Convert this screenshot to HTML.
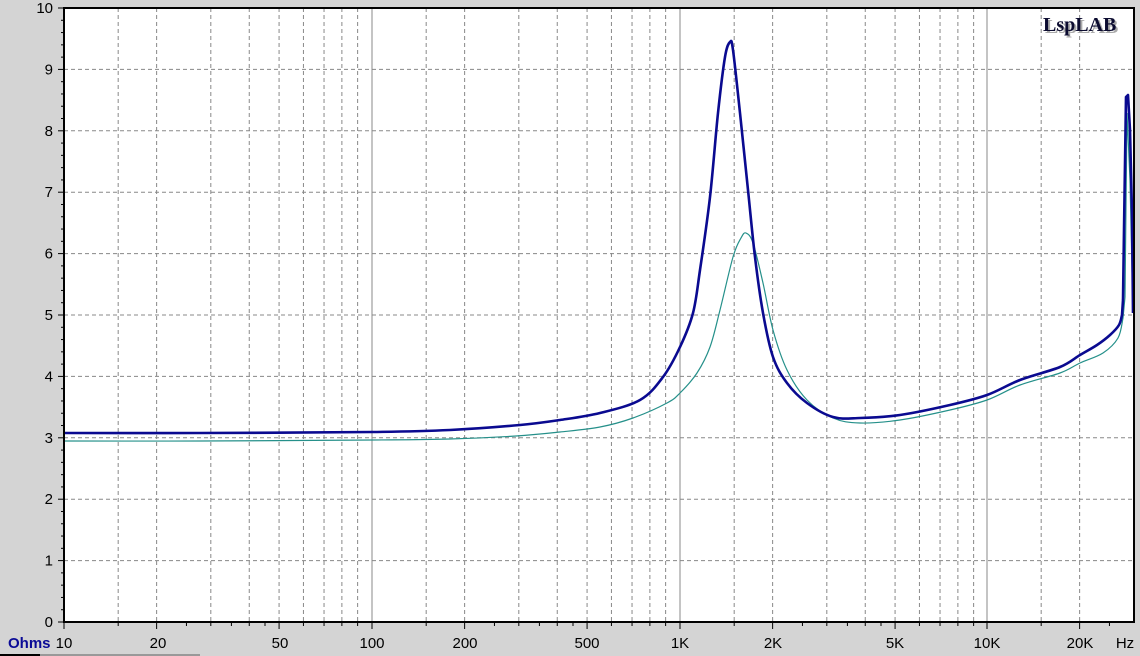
<!DOCTYPE html>
<html><head><meta charset="utf-8"><style>
html,body{margin:0;padding:0;background:#d4d4d4;width:1140px;height:656px;overflow:hidden}
svg{display:block}
text{font-family:"Liberation Sans",Arial,sans-serif;font-size:15px;fill:#000}
</style></head><body>
<svg id="s" width="1140" height="656" xmlns="http://www.w3.org/2000/svg">
<rect x="0" y="0" width="1140" height="656" fill="#d4d4d4"/>
<rect x="64" y="8" width="1070" height="614" fill="#fff"/>
<g id="grid"></g>
<path id="teal" fill="none" stroke="#25908a" stroke-width="1.2" d=""/>
<path id="blue" fill="none" stroke="#0a0a90" stroke-width="2.6" stroke-linejoin="round" d=""/>
<rect x="64" y="8" width="1070" height="614" fill="none" stroke="#000" stroke-width="2"/>
<g id="lab"></g>
<text x="1045" y="33" style="font-family:'Liberation Serif',serif;font-size:20px;font-weight:bold;fill:#aaa">LspLAB</text>
<text x="1043" y="31" style="font-family:'Liberation Serif',serif;font-size:20px;font-weight:bold;fill:#0c0c30">LspLAB</text>
<text x="8" y="648" style="font-weight:bold;fill:#0a0a96;font-size:15px">Ohms</text>
<line x1="0" y1="655" x2="40" y2="655" stroke="#000" stroke-width="2"/>
<line x1="40" y1="655" x2="200" y2="655" stroke="#999" stroke-width="2"/>
</svg>
<script>
var g=document.getElementById('grid'),l=document.getElementById('lab'),ns='http://www.w3.org/2000/svg';
function el(p,t,a){var e=document.createElementNS(ns,t);for(var k in a)e.setAttribute(k,a[k]);p.appendChild(e);return e;}
function cr(pts){var d='M'+pts[0][0]+','+pts[0][1];for(var i=0;i<pts.length-1;i++){var p0=pts[i-1]||pts[i],p1=pts[i],p2=pts[i+1],p3=pts[i+2]||p2;
var c1x=p1[0]+(p2[0]-p0[0])/6,c1y=p1[1]+(p2[1]-p0[1])/6,c2x=p2[0]-(p3[0]-p1[0])/6,c2y=p2[1]-(p3[1]-p1[1])/6;
d+=' C'+c1x+','+c1y+' '+c2x+','+c2y+' '+p2[0]+','+p2[1];}return d;}
var teal=[[64,441],[200,441],[372,440],[450,439],[516,436],[560,432],[600,427],[633,418],[667,403],[680,393],[697,373],[710,347],[720,310],[733,257],[741,238],[746,233],[753,243],[763,283],[773,330],[787,370],[807,400],[833,418],[860,423],[900,420],[950,410],[987,400],[1020,385],[1060,373],[1080,363],[1103,353],[1118,338],[1123,318]];
var blue=[[64,433],[200,433],[372,432],[450,430],[520,425],[560,420],[600,413],[640,400],[663,377],[680,347],[693,313],[700,270],[710,197],[718,113],[725,57],[730,42],[733,50],[740,113],[748,190],[755,257],[763,313],[773,357],[787,383],[807,403],[833,417],[860,418],[900,415],[950,405],[987,395],[1020,380],[1060,367],[1080,355],[1097,345],[1110,335],[1119,325],[1122,315]];
document.getElementById('teal').setAttribute('d',cr(teal)+' L1125,297 L1127,113 L1130,180 L1133,313');
document.getElementById('blue').setAttribute('d',cr(blue)+' L1123,300 L1124,230 L1126,97 L1128,95 L1130,130 L1132,213 L1133,313');
var d0=[64,372,680,987],D=307.7;
for(var i=1;i<10;i++){var y=622-i*61.4;el(g,'line',{x1:64,x2:1134,y1:y,y2:y,stroke:'#888','stroke-dasharray':'4,3'});}
for(var i=0;i<=10;i++){var y=622-i*61.4;el(l,'line',{x1:58,x2:64,y1:y,y2:y,stroke:'#000'});var t=el(l,'text',{x:53,y:y+5,'text-anchor':'end'});t.textContent=i;
 if(i<10)for(var j=1;j<5;j++){var yy=y-j*12.28;el(l,'line',{x1:61,x2:64,y1:yy,y2:yy,stroke:'#000'});}}
var ms=[1.5,2,3,4,5,6,7,8,9];
d0.forEach(function(x0,k){
 if(k>0)el(g,'line',{x1:x0,x2:x0,y1:8,y2:622,stroke:'#888'});
 ms.forEach(function(m){var x=x0+D*Math.log10(m);if(x<1132)el(g,'line',{x1:x,x2:x,y1:8,y2:622,stroke:'#888','stroke-dasharray':'4,3'});});
 [1,1.5,2,2.5,3,3.5,4,4.5,5,6,7,8,9].forEach(function(m){var x=x0+D*Math.log10(m);if(x<1133)el(l,'line',{x1:x,x2:x,y1:622,y2:(m==1||m==2||m==5)?629:626,stroke:'#000'});});
});
var xl=[['10',64],['20',158],['50',280],['100',372],['200',465],['500',587],['1K',680],['2K',773],['5K',895],['10K',987],['20K',1080]];
xl.forEach(function(a){var t=el(l,'text',{x:a[1],y:648,'text-anchor':'middle'});t.textContent=a[0];});
var t=el(l,'text',{x:1125,y:648,'text-anchor':'middle'});t.textContent='Hz';
</script>
</body></html>
